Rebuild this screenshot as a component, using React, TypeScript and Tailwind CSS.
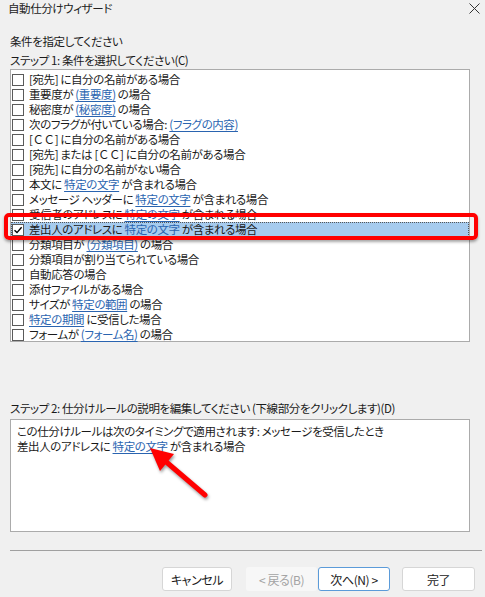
import React from "react";

type Part = string | { link: string } | { wide: string };

const CC = { wide: "ＣＣ" };

const rows: Part[][] = [
  ["[宛先] に自分の名前がある場合"],
  ["重要度が ", { link: "(重要度)" }, " の場合"],
  ["秘密度が ", { link: "(秘密度)" }, " の場合"],
  ["次のフラグが付いている場合: ", { link: "(フラグの内容)" }],
  ["[", CC, "] に自分の名前がある場合"],
  ["[宛先] または [", CC, "] に自分の名前がある場合"],
  ["[宛先] に自分の名前がない場合"],
  ["本文に ", { link: "特定の文字" }, " が含まれる場合"],
  ["メッセージ ヘッダーに ", { link: "特定の文字" }, " が含まれる場合"],
  ["受信者のアドレスに ", { link: "特定の文字" }, " が含まれる場合"],
  ["差出人のアドレスに ", { link: "特定の文字" }, " が含まれる場合"],
  ["分類項目が ", { link: "(分類項目)" }, " の場合"],
  ["分類項目が割り当てられている場合"],
  ["自動応答の場合"],
  ["添付ファイルがある場合"],
  ["サイズが ", { link: "特定の範囲" }, " の場合"],
  [{ link: "特定の期間" }, " に受信した場合"],
  ["フォームが ", { link: "(フォーム名)" }, " の場合"],
];

function Text({ parts }: { parts: Part[] }) {
  return (
    <span className="whitespace-pre">
      {parts.map((p, i) => {
        if (typeof p === "string") return <span key={i}>{p}</span>;
        if ("wide" in p)
          return (
            <span key={i} className="[font-feature-settings:normal]">
              {p.wide}
            </span>
          );
        return (
          <span key={i} className="text-[#2a64b0] underline decoration-[#2a64b0] underline-offset-2">
            {p.link}
          </span>
        );
      })}
    </span>
  );
}

function Checkbox({ checked }: { checked?: boolean }) {
  return (
    <div className="flex h-[12px] w-[12px] shrink-0 items-center justify-center border border-[#5a5a5a] bg-white">
      {checked && (
        <svg width="10" height="10" viewBox="0 0 10 10">
          <path d="M1.5 5.2 L4 7.6 L8.6 2.2" fill="none" stroke="#000" strokeWidth="1.4" />
        </svg>
      )}
    </div>
  );
}

function Btn({ label, className }: { label: string; className: string }) {
  return (
    <div className={"flex h-[24px] items-center justify-center rounded-[3px] text-[12px] " + className}>
      {label}
    </div>
  );
}

export default function App() {
  return (
    <div className="relative h-[597px] w-[485px] overflow-hidden bg-[#f0f0f0] font-['Noto_Sans_CJK_JP',sans-serif] text-[11.5px] leading-[15px] tracking-[-0.4px] text-[#1a1a1a] [font-feature-settings:'palt']">
      {/* title bar */}
      <div className="flex h-[17px] items-center justify-between pl-[8px] pr-[4px]">
        <span className="text-[#222]">自動仕分けウィザード</span>
        <svg width="11" height="11" viewBox="0 0 11 11" className="mr-[1px]">
          <path d="M0.5 0.5 L10.5 10.5 M10.5 0.5 L0.5 10.5" stroke="#333" strokeWidth="1" />
        </svg>
      </div>

      <div className="px-[10px]">
        <div className="mt-[17px]">条件を指定してください</div>
        <div className="mt-[4px]">ステップ 1: 条件を選択してください(C)</div>

        <div className="mt-[1px] h-[273px] w-[460px] border border-[#ababab] bg-white pt-[2px]">
          {rows.map((parts, i) => {
            const selected = i === 10;
            return (
              <div
                key={i}
                className={
                  "flex h-[15px] items-center gap-[5px] " +
                  (selected ? "border border-dotted border-[#555] bg-[#a6cbee]" : "pl-[1px]")
                }
              >
                <Checkbox checked={selected} />
                <Text parts={parts} />
              </div>
            );
          })}
        </div>

        <div className="mt-[59px]">ステップ 2: 仕分けルールの説明を編集してください (下線部分をクリックします)(D)</div>
        <div className="mt-[3px] h-[113px] w-[460px] border border-[#ababab] bg-white px-[6px] pt-[4px]">
          <div>この仕分けルールは次のタイミングで適用されます: メッセージを受信したとき</div>
          <Text parts={["差出人のアドレスに ", { link: "特定の文字" }, " が含まれる場合"]} />
        </div>

        <div className="mt-[18px] h-px w-[472px] bg-[#a0a0a0]" />

        <div className="mt-[16px] flex pl-[152px]">
          <Btn label="キャンセル" className="w-[72px] border border-[#d6d6d6] bg-white" />
          <Btn label="< 戻る(B)" className="ml-[14px] w-[73px] bg-[#f7f7f7] text-[#a3a3a3]" />
          <Btn label="次へ(N) >" className="ml-[1px] w-[74px] border border-[#5b9bd9] bg-white" />
          <Btn label="完了" className="ml-[12px] w-[75px] border border-[#d6d6d6] bg-white" />
        </div>
      </div>

      {/* red highlight annotation */}
      <div className="pointer-events-none absolute left-[4px] top-[213px] h-[27px] w-[474px] rounded-[5px] border-[4px] border-[#ff0000] shadow-[0_2px_3px_rgba(0,0,0,0.35)]" />

      {/* red arrow annotation */}
      <svg
        className="pointer-events-none absolute left-0 top-0 drop-shadow-[1px_2px_1.5px_rgba(0,0,0,0.4)]"
        width="485"
        height="597"
      >
        <line x1="205" y1="495" x2="164" y2="460" stroke="#ff0000" strokeWidth="5" strokeLinecap="round" />
        <polygon points="150,448 174,454 160,471" fill="#ff0000" />
      </svg>
    </div>
  );
}
